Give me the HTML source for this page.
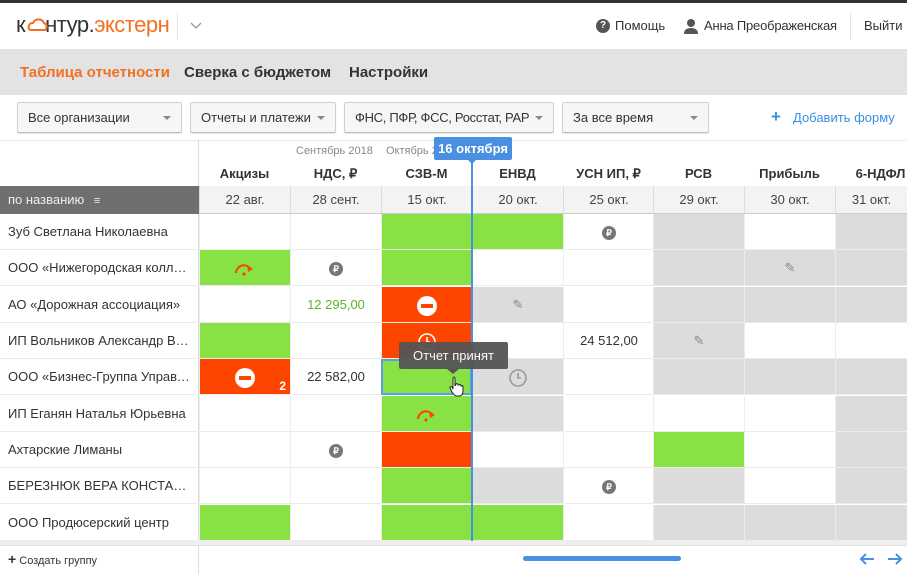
<!DOCTYPE html>
<html><head><meta charset="utf-8"><style>
*{margin:0;padding:0;box-sizing:border-box}
body{width:907px;height:574px;overflow:hidden;background:#fff;font-family:"Liberation Sans",sans-serif;color:#333;position:relative;font-size:13px}
.a{position:absolute}
.sel{position:absolute;top:102px;height:31px;background:#f6f6f6;border:1px solid #d0d0d0;border-bottom-color:#bbb;border-radius:2px;box-shadow:0 1px 1px rgba(0,0,0,.1);font-size:13px;line-height:29px;padding-left:10px;color:#333;white-space:nowrap;overflow:hidden}
.sel:after{content:"";position:absolute;right:10px;top:13px;border:4px solid transparent;border-top:4px solid #888}
.hd{position:absolute;top:166px;width:91px;text-align:center;font-weight:bold;font-size:13px;color:#333}
.dt{position:absolute;top:186px;height:28px;width:91px;text-align:center;line-height:28px;font-size:13px;color:#444;background:#f3f3f3;border-left:1px solid #dcdcdc;border-bottom:1px solid #ccc}
.row{position:absolute;left:0;width:199px;height:36px;line-height:36px;padding-left:8px;padding-right:8px;font-size:13px;color:#333;border-bottom:1px solid #ececec;white-space:nowrap;overflow:hidden;text-overflow:ellipsis}
.c{position:absolute;width:91px;height:36px;border-left:1px solid #ececec;border-bottom:1px solid #ececec;text-align:center;line-height:36px;font-size:13px}
.g{background:#89e244}.r{background:#fe4500}.s{background:#dcdcdc}
.rub{display:inline-block;width:14px;height:14px;border-radius:50%;background:#777;color:#fff;font-size:9px;line-height:14px;font-weight:bold;vertical-align:middle}
.min{display:inline-block;width:20px;height:20px;border-radius:50%;background:#fff;position:relative;vertical-align:middle}
.min:after{content:"";position:absolute;left:4px;top:8px;width:12px;height:4px;background:#fe4500}
</style></head><body>
<div class="a" style="left:0;top:0;width:907px;height:3px;background:#333"></div>
<div class="a" style="left:16px;top:12px;font-size:22px;color:#333;letter-spacing:-.5px">к<span style="display:inline-block;width:20px"></span>нтур.<span style="color:#f36f21">экстерн</span></div>
<svg class="a" style="left:27px;top:17px" width="22" height="16" viewBox="0 0 22 16"><path d="M3 13 H18 A4 4 0 0 0 17 6 A6 6 0 0 0 6 6 A4 4 0 0 0 3 13Z" fill="none" stroke="#f36f21" stroke-width="2"/></svg>
<div class="a" style="left:177px;top:13px;width:1px;height:27px;background:#e3e3e3"></div>
<svg class="a" style="left:190px;top:22px" width="12" height="8"><path d="M1 1 L6 6 L11 1" fill="none" stroke="#999" stroke-width="1.3"/></svg>
<div class="a" style="left:596px;top:19px;width:14px;height:14px;border-radius:50%;background:#555;color:#fff;font-size:10px;font-weight:bold;text-align:center;line-height:14px">?</div>
<div class="a" style="left:615px;top:18px;font-size:13px">Помощь</div>
<svg class="a" style="left:684px;top:18px" width="14" height="16"><circle cx="7" cy="5" r="4" fill="#555"/><path d="M0 16 Q0 10 7 10 Q14 10 14 16Z" fill="#555"/></svg>
<div class="a" style="left:704px;top:18px;font-size:13px;letter-spacing:-.2px">Анна Преображенская</div>
<div class="a" style="left:850px;top:13px;width:1px;height:27px;background:#e3e3e3"></div>
<div class="a" style="left:864px;top:18px;font-size:13px">Выйти</div>
<div class="a" style="left:0;top:49px;width:907px;height:46px;background:#e3e3e3"></div>
<div class="a" style="left:20px;top:64px;font-size:15px;font-weight:bold;color:#f36f21">Таблица отчетности</div>
<div class="a" style="left:184px;top:64px;font-size:15px;font-weight:bold;color:#333">Сверка с бюджетом</div>
<div class="a" style="left:349px;top:64px;font-size:15px;font-weight:bold;color:#333">Настройки</div>
<div class="sel" style="left:17px;width:165px">Все организации</div>
<div class="sel" style="left:190px;width:146px">Отчеты и платежи</div>
<div class="sel" style="left:344px;width:210px;letter-spacing:-.3px">ФНС, ПФР, ФСС, Росстат, РАР</div>
<div class="sel" style="left:562px;width:147px">За все время</div>
<div class="a" style="left:771px;top:107px;font-size:17px;color:#3a8ee6;font-weight:bold">+</div>
<div class="a" style="left:793px;top:110px;font-size:13px;color:#3a8ee6">Добавить форму</div>
<div class="a" style="left:0;top:140px;width:907px;height:1px;background:#e8e8e8"></div>
<div class="a" style="left:198px;top:140px;width:1px;height:434px;background:#dcdcdc"></div>
<div class="a" style="left:296px;top:145px;font-size:11px;color:#888">Сентябрь 2018</div>
<div class="a" style="left:386px;top:145px;font-size:11px;color:#888">Октябрь 2</div>
<div class="hd" style="left:199px">Акцизы</div><div class="hd" style="left:290px">НДС, ₽</div><div class="hd" style="left:381px">СЗВ-М</div><div class="hd" style="left:472px">ЕНВД</div><div class="hd" style="left:563px">УСН ИП, ₽</div><div class="hd" style="left:653px">РСВ</div><div class="hd" style="left:744px">Прибыль</div><div class="hd" style="left:835px">6-НДФЛ</div>
<div class="a" style="left:0;top:186px;width:199px;height:28px;background:#6f6f6f;color:#eee;font-size:13px;line-height:28px;padding-left:8px">по названию <span style="font-size:11px;font-weight:bold;margin-left:6px">≡</span></div>
<div class="dt" style="left:199px">22 авг.</div><div class="dt" style="left:290px">28 сент.</div><div class="dt" style="left:381px">15 окт.</div><div class="dt" style="left:472px">20 окт.</div><div class="dt" style="left:563px">25 окт.</div><div class="dt" style="left:653px">29 окт.</div><div class="dt" style="left:744px">30 окт.</div><div class="dt" style="left:835px;width:72px">31 окт.</div>

<div class="row" style="top:214px">Зуб Светлана Николаевна</div>
<div class="row" style="top:250px">ООО «Нижегородская коллекция»</div>
<div class="row" style="top:287px">АО «Дорожная ассоциация»</div>
<div class="row" style="top:323px">ИП Вольников Александр Владимирович</div>
<div class="row" style="top:359px">ООО «Бизнес-Группа Управление»</div>
<div class="row" style="top:396px">ИП Еганян Наталья Юрьевна</div>
<div class="row" style="top:432px">Ахтарские Лиманы</div>
<div class="row" style="top:468px">БЕРЕЗНЮК ВЕРА КОНСТАНТИНОВНА</div>
<div class="row" style="top:505px">ООО Продюсерский центр</div>

<!-- row1 -->
<div class="c" style="left:199px;top:214px"></div><div class="c" style="left:290px;top:214px"></div><div class="c g" style="left:381px;top:214px"></div><div class="c g" style="left:472px;top:214px"></div><div class="c" style="left:563px;top:214px"><span class="rub">₽</span></div><div class="c s" style="left:653px;top:214px"></div><div class="c" style="left:744px;top:214px"></div><div class="c s" style="left:835px;top:214px"></div>
<!-- row2 -->
<div class="c g" style="left:199px;top:250px"><svg width="22" height="14" style="vertical-align:middle"><path d="M2 11 A8 8 0 0 1 16 6" fill="none" stroke="#fe4500" stroke-width="2"/><path d="M13 3 L19 7 L14 10Z" fill="#fe4500"/><circle cx="10" cy="12" r="1.6" fill="#fe4500"/></svg></div><div class="c" style="left:290px;top:250px"><span class="rub">₽</span></div><div class="c g" style="left:381px;top:250px"></div><div class="c" style="left:472px;top:250px"></div><div class="c" style="left:563px;top:250px"></div><div class="c s" style="left:653px;top:250px"></div><div class="c s" style="left:744px;top:250px;color:#888">✎</div><div class="c s" style="left:835px;top:250px"></div>
<!-- row3 -->
<div class="c" style="left:199px;top:287px"></div><div class="c" style="left:290px;top:287px;color:#5ab52a">12 295,00</div><div class="c r" style="left:381px;top:287px"><span class="min"></span></div><div class="c s" style="left:472px;top:287px;color:#888">✎</div><div class="c" style="left:563px;top:287px"></div><div class="c s" style="left:653px;top:287px"></div><div class="c s" style="left:744px;top:287px"></div><div class="c s" style="left:835px;top:287px"></div>
<!-- row4 -->
<div class="c g" style="left:199px;top:323px"></div><div class="c" style="left:290px;top:323px"></div><div class="c r" style="left:381px;top:323px"><svg width="20" height="20" style="vertical-align:middle"><circle cx="10" cy="10" r="8" fill="none" stroke="#fff" stroke-width="1.6"/><path d="M10 5 V10 H13" fill="none" stroke="#fff" stroke-width="1.6"/></svg></div><div class="c" style="left:472px;top:323px"></div><div class="c" style="left:563px;top:323px">24 512,00</div><div class="c s" style="left:653px;top:323px;color:#888">✎</div><div class="c" style="left:744px;top:323px"></div><div class="c" style="left:835px;top:323px"></div>
<!-- row5 -->
<div class="c r" style="left:199px;top:359px"><span class="min"></span><span style="position:absolute;right:4px;bottom:0;line-height:16px;color:#fff;font-weight:bold;font-size:12px">2</span></div><div class="c" style="left:290px;top:359px">22 582,00</div><div class="c g" style="left:381px;top:359px;border:2px solid #5b9ee8"></div><div class="c s" style="left:472px;top:359px"><svg width="20" height="20" style="vertical-align:middle"><circle cx="10" cy="10" r="8" fill="none" stroke="#999" stroke-width="1.6"/><path d="M10 5 V10 H13" fill="none" stroke="#999" stroke-width="1.6"/></svg></div><div class="c" style="left:563px;top:359px"></div><div class="c s" style="left:653px;top:359px"></div><div class="c s" style="left:744px;top:359px"></div><div class="c s" style="left:835px;top:359px"></div>
<!-- row6 -->
<div class="c" style="left:199px;top:396px"></div><div class="c" style="left:290px;top:396px"></div><div class="c g" style="left:381px;top:396px"><svg width="22" height="14" style="vertical-align:middle"><path d="M2 11 A8 8 0 0 1 16 6" fill="none" stroke="#fe4500" stroke-width="2"/><path d="M13 3 L19 7 L14 10Z" fill="#fe4500"/><circle cx="10" cy="12" r="1.6" fill="#fe4500"/></svg></div><div class="c s" style="left:472px;top:396px"></div><div class="c" style="left:563px;top:396px"></div><div class="c" style="left:653px;top:396px"></div><div class="c" style="left:744px;top:396px"></div><div class="c s" style="left:835px;top:396px"></div>
<!-- row7 -->
<div class="c" style="left:199px;top:432px"></div><div class="c" style="left:290px;top:432px"><span class="rub">₽</span></div><div class="c r" style="left:381px;top:432px"></div><div class="c" style="left:472px;top:432px"></div><div class="c" style="left:563px;top:432px"></div><div class="c g" style="left:653px;top:432px"></div><div class="c" style="left:744px;top:432px"></div><div class="c s" style="left:835px;top:432px"></div>
<!-- row8 -->
<div class="c" style="left:199px;top:468px"></div><div class="c" style="left:290px;top:468px"></div><div class="c g" style="left:381px;top:468px"></div><div class="c s" style="left:472px;top:468px"></div><div class="c" style="left:563px;top:468px"><span class="rub">₽</span></div><div class="c s" style="left:653px;top:468px"></div><div class="c" style="left:744px;top:468px"></div><div class="c s" style="left:835px;top:468px"></div>
<!-- row9 -->
<div class="c g" style="left:199px;top:505px"></div><div class="c" style="left:290px;top:505px"></div><div class="c g" style="left:381px;top:505px"></div><div class="c g" style="left:472px;top:505px"></div><div class="c" style="left:563px;top:505px"></div><div class="c s" style="left:653px;top:505px"></div><div class="c s" style="left:744px;top:505px"></div><div class="c s" style="left:835px;top:505px"></div>

<div class="a" style="left:0;top:541px;width:907px;height:5px;background:#efefef"></div>
<div class="a" style="left:0;top:545px;width:907px;height:29px;background:#fff;border-top:1px solid #e3e3e3"></div>
<div class="a" style="left:198px;top:545px;width:1px;height:29px;background:#dcdcdc"></div>
<div class="a" style="left:8px;top:551px;font-size:11px;color:#333"><b style="font-size:14px">+</b> Создать группу</div>
<div class="a" style="left:523px;top:556px;width:158px;height:5px;border-radius:3px;background:#4a90e2"></div>
<svg class="a" style="left:859px;top:552px" width="16" height="14"><path d="M15 7 H2 M7 2 L2 7 L7 12" fill="none" stroke="#4a90e2" stroke-width="2"/></svg>
<svg class="a" style="left:887px;top:552px" width="16" height="14"><path d="M1 7 H14 M9 2 L14 7 L9 12" fill="none" stroke="#4a90e2" stroke-width="2"/></svg>

<div class="a" style="left:471px;top:158px;width:2px;height:383px;background:#4a90e2"></div>
<div class="a" style="left:434px;top:137px;width:78px;height:23px;background:#4a90e2;border-radius:2px;color:#fff;font-weight:bold;font-size:13px;text-align:center;line-height:23px">16 октября</div>
<div class="a" style="left:467px;top:159px;border:5px solid transparent;border-top:5px solid #4a90e2"></div>

<div class="a" style="left:399px;top:342px;width:109px;height:27px;background:#555;opacity:.95;border-radius:2px;color:#fff;font-size:13px;text-align:center;line-height:27px">Отчет принят</div>
<div class="a" style="left:447px;top:369px;border:6px solid transparent;border-top:5px solid #555"></div>
<svg class="a" style="left:448px;top:376px" width="18" height="22"><path d="M5 2 Q6 0 7 2 V10 L8 8 Q10 7 10 9 L11 9 Q13 8 13 10 Q15 9 15 11 V15 Q15 19 12 20 H8 Q6 19 4 16 L2 12 Q2 10 4 11 L5 13Z" fill="#fff" stroke="#222" stroke-width="1"/></svg>
</body></html>
